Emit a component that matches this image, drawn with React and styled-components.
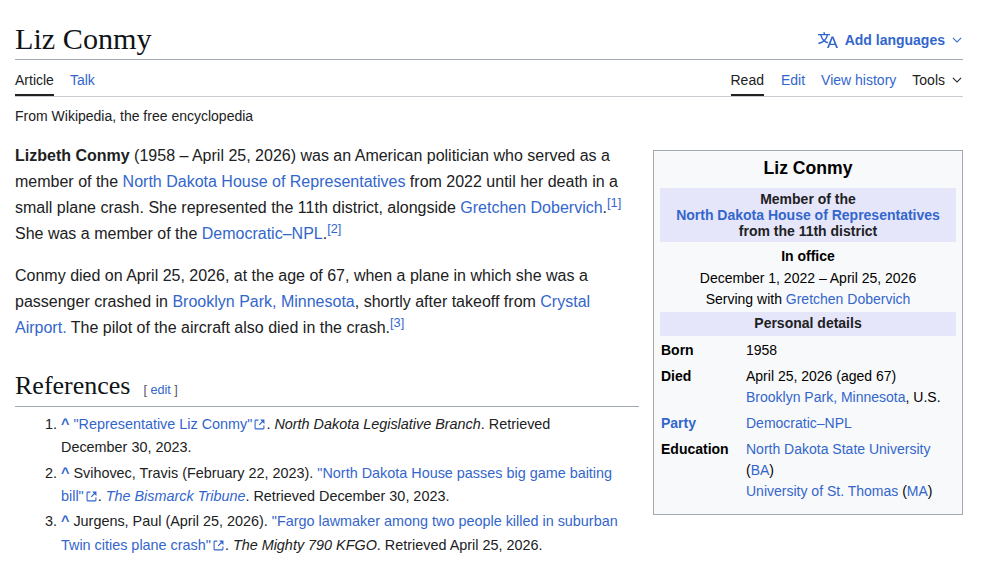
import React from "react";
import styled, { createGlobalStyle } from "styled-components";

const Global = createGlobalStyle`
  html, body { margin: 0; padding: 0; background: #fff; }
  body { font-family: "Liberation Sans", Arial, sans-serif; color: #202122; font-size: 16px; }
  a { color: #3366cc; text-decoration: none; }
`;

const Page = styled.div`
  width: 948px;
  padding: 0 18px 0 15px;
  height: 572px;
  overflow: hidden;
`;
const TitleBar = styled.header`
  display: flex;
  align-items: flex-end;
  justify-content: space-between;
  height: 59px;
  border-bottom: 1px solid #a2a9b1;
`;
const Title = styled.h1`
  margin: 0;
  font: 400 30.2px/38px "Liberation Serif", "Times New Roman", serif;
  color: #101418;
  padding-bottom: 1px;
`;
const LangButton = styled.a`
  display: flex;
  align-items: center;
  font-size: 14px;
  font-weight: 700;
  line-height: 20px;
  margin-bottom: 9px;
  svg { fill: #3366cc; display: block; }
`;
const LangIcon = styled.svg`
  width: 20px;
  height: 20px;
  margin-right: 7px;
`;
const Chevron = styled.svg`
  width: 10px;
  height: 10px;
  margin-left: 7px;
  margin-right: 1px;
  fill: ${(p) => p.$color || "#3366cc"} !important;
`;
const TabBar = styled.nav`
  display: flex;
  justify-content: space-between;
  height: 36px;
  border-bottom: 1px solid #c8ccd1;
`;
const TabGroup = styled.div`
  display: flex;
  gap: 16px;
`;
const Tab = styled.a`
  display: flex;
  align-items: center;
  height: 36px;
  box-sizing: border-box;
  padding-top: 5px;
  font-size: 14px;
  margin-right: ${(p) => p.$trail || "0"};
  color: ${(p) => (p.$active || p.$plain ? "#202122" : "#3366cc")};
  border-bottom: 2px solid ${(p) => (p.$active ? "#202122" : "transparent")};
`;
const Tagline = styled.div`
  font-size: 14px;
  line-height: 20px;
  margin-top: 9px;
  color: #202122;
`;
const Content = styled.div`
  display: flex;
  gap: 14px;
  align-items: flex-start;
  margin-top: 17px;
`;
const Main = styled.main`
  width: 624px;
  flex: none;
`;
const Para = styled.p`
  margin: 0 0 16px;
  line-height: 26px;
  font-size: 16px;
`;
const Sup = styled.sup`
  font-size: 12.8px;
  line-height: 1;
  vertical-align: 6px;
`;
const RefHeading = styled.h2`
  display: flex;
  align-items: baseline;
  margin: 28px 0 0;
  padding-bottom: 3px;
  border-bottom: 1px solid #a2a9b1;
  font: 400 26px/34px "Liberation Serif", "Times New Roman", serif;
  color: #101418;
`;
const EditLink = styled.span`
  font: 400 12.6px/16px "Liberation Sans", Arial, sans-serif;
  margin-left: 13px;
  color: #54595d;
`;
const RefList = styled.ol`
  margin: 6.2px 0 0;
  padding: 0 10px 0 46px;
  font-size: 14.4px;
  line-height: 23.3px;
`;
const RefItem = styled.li`
  margin-bottom: 2px;
`;
const Caret = styled.a`
  font-weight: 700;
`;
const ExtIcon = styled.svg`
  display: inline-block;
  width: 11px;
  height: 11px;
  margin-left: 2px;
  margin-right: 1px;
  fill: #3366cc;
  vertical-align: -1px;
`;
const Infobox = styled.aside`
  box-sizing: border-box;
  width: 310px;
  height: 365px;
  flex: none;
  padding: 3px 6px;
  margin-top: 7px;
  border: 1px solid #a2a9b1;
  background: #f8f9fa;
  font-size: 14px;
  line-height: 16px;
  color: #000;
`;
const BoxTitle = styled.div`
  font-size: 17.6px;
  font-weight: 700;
  line-height: 20px;
  text-align: center;
  padding: 4px 0 6px;
  margin-bottom: 4px;
`;
const BoxHeader = styled.div`
  background: #e6e6fa;
  color: #202122;
  font-weight: 700;
  text-align: center;
  padding: ${(p) => (p.$tall ? "3px 0" : "3px 0 5px")};
`;
const BoxLine = styled.div`
  text-align: center;
  font-weight: ${(p) => (p.$bold ? 700 : 400)};
  line-height: 19px;
  padding: ${(p) => p.$pad || "1px 0"};
`;
const DataRow = styled.div`
  display: grid;
  grid-template-columns: 85px 1fr;
  padding-left: 1px;
  line-height: 21px;
  margin-top: ${(p) => p.$top || "5px"};
`;
const Label = styled.div`
  font-weight: 700;
`;

const External = () => (
  <ExtIcon viewBox="0 0 20 20" aria-hidden="true">
    <path d="M17 17H3V3h5V1H3a2 2 0 0 0-2 2v14a2 2 0 0 0 2 2h14a2 2 0 0 0 2-2v-5h-2z" />
    <path d="M11 1l3.29 3.29-5.73 5.73 1.42 1.42 5.73-5.73L19 9V1z" />
  </ExtIcon>
);

const ExpandPath = "m17.5 4.75-7.5 7.5-7.5-7.5L1 6.25l9 9 9-9z";

export default function App() {
  return (
    <Page>
      <Global />
      <TitleBar>
        <Title>Liz Conmy</Title>
        <LangButton href="#">
          <LangIcon viewBox="0 0 20 20" aria-hidden="true">
            <path d="M20 18h-1.44a.6.6 0 0 1-.4-.12.8.8 0 0 1-.23-.31L17 15h-5l-1 2.54a.8.8 0 0 1-.22.3.6.6 0 0 1-.4.14H9l4.55-11.47h1.89zm-3.53-4.31L14.89 9.5a12 12 0 0 1-.39-1.24q-.09.37-.19.69l-.19.56-1.58 4.19zm-6.3-1.58a13.4 13.4 0 0 1-2.91-1.41 11.46 11.46 0 0 0 2.81-5.37H12V4H7.31a4 4 0 0 0-.2-.56C6.87 2.79 6.6 2 6.6 2l-1.47.5s.4.89.6 1.5H0v1.33h2.15A11.23 11.23 0 0 0 5 10.7a17.2 17.2 0 0 1-5 2.1q.56.82.87 1.38a23.3 23.3 0 0 0 5.22-2.51 15.6 15.6 0 0 0 3.56 1.77zM3.63 5.33h4.91a8.1 8.1 0 0 1-2.45 4.45 9.1 9.1 0 0 1-2.46-4.45" />
          </LangIcon>
          Add languages
          <Chevron viewBox="0 0 20 20" aria-hidden="true"><path d={ExpandPath} /></Chevron>
        </LangButton>
      </TitleBar>
      <TabBar>
        <TabGroup>
          <Tab $active>Article</Tab>
          <Tab href="#">Talk</Tab>
        </TabGroup>
        <TabGroup>
          <Tab $active $trail="1px">Read</Tab>
          <Tab href="#">Edit</Tab>
          <Tab href="#">View history</Tab>
          <Tab $plain>
            Tools
            <Chevron $color="#202122" viewBox="0 0 20 20" aria-hidden="true"><path d={ExpandPath} /></Chevron>
          </Tab>
        </TabGroup>
      </TabBar>
      <Tagline>From Wikipedia, the free encyclopedia</Tagline>
      <Content>
        <Main>
          <Para>
            <b>Lizbeth Conmy</b> (1958 – April 25, 2026) was an American politician who served as a member of the{" "}
            <a href="#">North Dakota House of Representatives</a> from 2022 until her death in a small plane crash. She
            represented the 11th district, alongside <a href="#">Gretchen Dobervich</a>.<Sup><a href="#">[1]</a></Sup>{" "}
            She was a member of the <a href="#">Democratic–NPL</a>.<Sup><a href="#">[2]</a></Sup>
          </Para>
          <Para>
            Conmy died on April 25, 2026, at the age of 67, when a plane in which she was a passenger crashed in{" "}
            <a href="#">Brooklyn Park, Minnesota</a>, shortly after takeoff from <a href="#">Crystal Airport.</a> The
            pilot of the aircraft also died in the crash.<Sup><a href="#">[3]</a></Sup>
          </Para>
          <RefHeading>
            References
            <EditLink>[ <a href="#">edit</a> ]</EditLink>
          </RefHeading>
          <RefList>
            <RefItem>
              <Caret href="#">^</Caret> <a href="#">"Representative Liz Conmy"<External /></a>. <i>North Dakota Legislative Branch</i>. Retrieved December&nbsp;30,&nbsp;2023.
            </RefItem>
            <RefItem>
              <Caret href="#">^</Caret> Svihovec, Travis (February 22, 2023). <a href="#">"North Dakota House passes big game baiting bill"<External /></a>. <a href="#"><i>The Bismarck Tribune</i></a>. Retrieved December&nbsp;30,&nbsp;2023.
            </RefItem>
            <RefItem>
              <Caret href="#">^</Caret> Jurgens, Paul (April 25, 2026). <a href="#">"Fargo lawmaker among two people killed in suburban Twin cities plane crash"<External /></a>. <i>The Mighty 790 KFGO</i>. Retrieved April&nbsp;25,&nbsp;2026.
            </RefItem>
          </RefList>
        </Main>
        <Infobox>
          <BoxTitle>Liz Conmy</BoxTitle>
          <BoxHeader $tall>
            Member of the<br />
            <a href="#">North Dakota House of Representatives</a><br />
            from the 11th district
          </BoxHeader>
          <BoxLine $bold $pad="5px 0 1px">In office</BoxLine>
          <BoxLine $pad="2px 0">December 1, 2022 – April 25, 2026</BoxLine>
          <BoxLine $pad="0 0 3px">Serving with <a href="#">Gretchen Dobervich</a></BoxLine>
          <BoxHeader>Personal details</BoxHeader>
          <DataRow $top="4px">
            <Label>Born</Label>
            <div>1958</div>
          </DataRow>
          <DataRow>
            <Label>Died</Label>
            <div>April 25, 2026 (aged 67)<br /><a href="#">Brooklyn Park, Minnesota</a>, U.S.</div>
          </DataRow>
          <DataRow>
            <Label><a href="#">Party</a></Label>
            <div><a href="#">Democratic–NPL</a></div>
          </DataRow>
          <DataRow>
            <Label>Education</Label>
            <div>
              <a href="#">North Dakota State University</a> (<a href="#">BA</a>)<br />
              <a href="#">University of St. Thomas</a> (<a href="#">MA</a>)
            </div>
          </DataRow>
        </Infobox>
      </Content>
    </Page>
  );
}
